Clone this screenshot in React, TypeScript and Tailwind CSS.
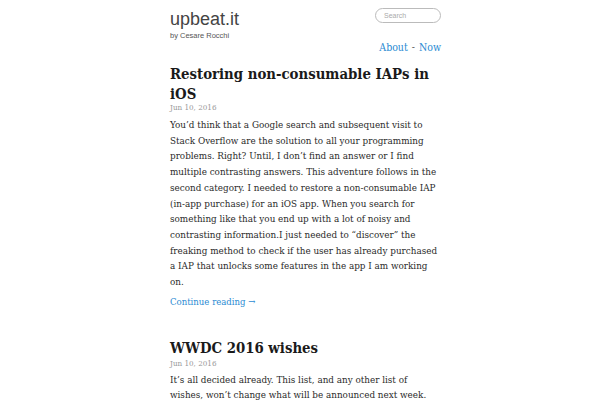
const post1 = [
  'You’d think that a Google search and subsequent visit to',
  'Stack Overflow are the solution to all your programming',
  'problems. Right? Until, I don’t find an answer or I find',
  'multiple contrasting answers. This adventure follows in the',
  'second category. I needed to restore a non-consumable IAP',
  '(in-app purchase) for an iOS app. When you search for',
  'something like that you end up with a lot of noisy and',
  'contrasting information.I just needed to “discover” the',
  'freaking method to check if the user has already purchased',
  'a IAP that unlocks some features in the app I am working',
  'on.',
];

const post2 = [
  'It’s all decided already. This list, and any other list of',
  'wishes, won’t change what will be announced next week.',
];

function Lines({ lines }: { lines: string[] }) {
  return (
    <p className="text-[9.8px] leading-[15.7px] text-[#2a2a2a]">
      {lines.map((l, i) => (
        <span key={i} className="block whitespace-nowrap">{l}</span>
      ))}
    </p>
  );
}

export default function App() {
  const serif = { fontFamily: '"DejaVu Serif Condensed", "DejaVu Serif", serif' };
  const sans = { fontFamily: '"Liberation Sans", Arial, sans-serif' };
  return (
    <div className="w-[600px] h-[400px] overflow-hidden bg-white">
      <div className="w-[271px] ml-[170px]">
        <header className="flex justify-between pt-[8px]">
          <div>
            <div className="text-[18px] leading-[22px] text-[#444]" style={sans}>upbeat.it</div>
            <div className="text-[7.5px] leading-[10px] text-[#555] mt-[1px]" style={sans}>by Cesare Rocchi</div>
          </div>
          <div className="w-[66px] h-[15px] rounded-full border border-[#bbb] pl-[8px] text-[7px] leading-[13px] text-[#aaa]" style={sans}>Search</div>
        </header>
        <nav className="flex justify-end mt-[-1px] text-[10.5px] leading-[14px] text-[#2b8bd3]" style={serif}>
          <span>About</span><span className="mx-[4px] text-[#666]">-</span><span>Now</span>
        </nav>
        <article className="mt-[10px]" style={serif}>
          <h1 className="text-[14.8px] leading-[20px] font-bold text-[#1a1a1a]">Restoring non-consumable IAPs in iOS</h1>
          <div className="text-[8px] leading-[10px] text-[#999] mt-[-1px]">Jun 10, 2016</div>
          <div className="mt-[4px]"><Lines lines={post1} /></div>
          <div className="mt-[5px] text-[9.5px] leading-[14px] text-[#2b8bd3]">Continue reading →</div>
        </article>
        <article className="mt-[29px]" style={serif}>
          <h1 className="text-[14.8px] leading-[20px] font-bold text-[#1a1a1a]">WWDC 2016 wishes</h1>
          <div className="text-[8px] leading-[10px] text-[#999] mt-[1px]">Jun 10, 2016</div>
          <div className="mt-[3px]"><Lines lines={post2} /></div>
        </article>
      </div>
    </div>
  );
}
